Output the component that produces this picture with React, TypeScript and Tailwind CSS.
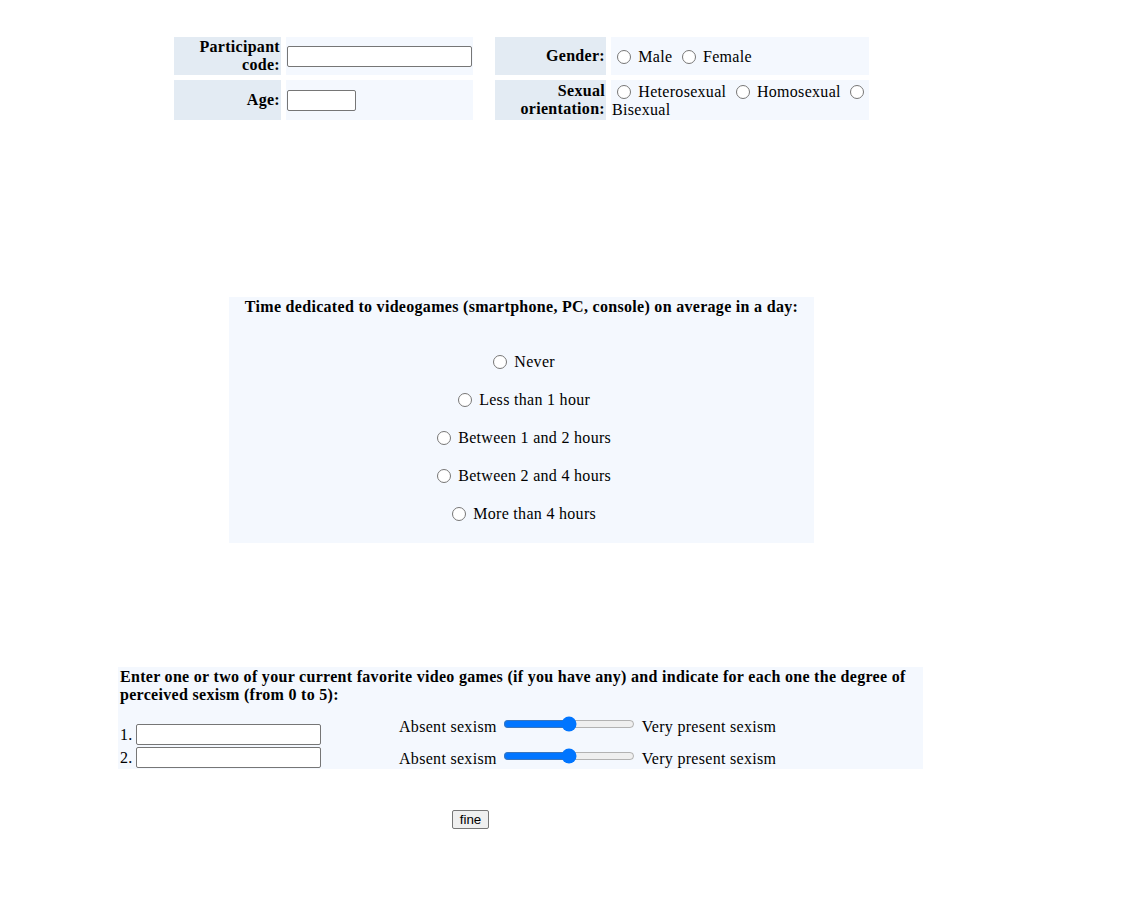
export default function App() {
  const times = [
    "Never",
    "Less than 1 hour",
    "Between 1 and 2 hours",
    "Between 2 and 4 hours",
    "More than 4 hours",
  ];

  const radio = "ml-[5px] mr-[3px] mt-[3px] w-[14px] h-[14px] align-[-2px]";
  const textInput = "h-[21px] border border-[#767676] rounded-[2px] bg-white";

  return (
    <div className="min-h-[897px] bg-white text-black text-[16px] tracking-[0.3px] font-['Liberation_Serif','Times_New_Roman',serif]">
      {/* Personal data */}
      <div className="pt-[37px] pl-[174px]">
        <div className="grid grid-cols-[107px_187px_12px_111px_258px] grid-rows-[38px_40px] gap-[5px] w-max">
          <div className="bg-[#e3ebf3] flex items-center justify-end text-right font-bold leading-[18px] pr-[1px]">
            Participant
            <br />
            code:
          </div>
          <div className="bg-[#f4f8fe] flex items-center pl-[1px]">
            <input type="text" className={`${textInput} w-[185px]`} />
          </div>
          <div />
          <div className="bg-[#e3ebf3] flex items-center justify-end text-right font-bold leading-[18px] pr-[1px]">
            Gender:
          </div>
          <div className="bg-[#f4f8fe] flex items-center pl-[1px]">
            <div className="leading-[18px]">
              <input type="radio" name="gender" className={radio} /> Male{" "}
              <input type="radio" name="gender" className={radio} /> Female
            </div>
          </div>

          <div className="bg-[#e3ebf3] flex items-center justify-end text-right font-bold leading-[18px] pr-[1px]">
            Age:
          </div>
          <div className="bg-[#f4f8fe] flex items-center pl-[1px]">
            <input type="text" className={`${textInput} w-[69px]`} />
          </div>
          <div />
          <div className="bg-[#e3ebf3] flex items-center justify-end text-right font-bold leading-[18px] pr-[1px]">
            <div>
              Sexual
              <br />
              orientation:
            </div>
          </div>
          <div className="bg-[#f4f8fe] flex items-center pl-[1px]">
            <div className="leading-[18px]">
              <input type="radio" name="orient" className={radio} /> Heterosexual{" "}
              <input type="radio" name="orient" className={radio} /> Homosexual{" "}
              <input type="radio" name="orient" className={radio} /> Bisexual
            </div>
          </div>
        </div>
      </div>

      {/* Time on videogames */}
      <div className="mt-[177px] ml-[229px] w-[585px] bg-[#f4f8fe] pb-[18px]">
        <div className="h-[20px] leading-[20px] text-center font-bold">
          Time dedicated to videogames (smartphone, PC, console) on average in a day:
        </div>
        <div className="mt-[34px] flex flex-col gap-[16px]">
          {times.map((t) => (
            <div key={t} className="h-[22px] leading-[22px] text-center">
              <input type="radio" name="time" className={radio} /> {t}
            </div>
          ))}
        </div>
      </div>

      {/* Favourite games */}
      <div className="mt-[124px] ml-[118px] w-[805px] bg-[#f4f8fe] pl-[2px] pt-[1px]">
        <div className="font-bold leading-[18px]">
          Enter one or two of your current favorite video games (if you have any) and indicate for each one the degree of perceived sexism (from 0 to 5):
        </div>
        <div className="flex h-[65px]">
          <div className="w-[201px] flex flex-col justify-end">
            {[1, 2].map((n) => (
              <div key={n} className="h-[23px] flex items-center">
                <span className="leading-[18px]">{n}.</span>
                <input type="text" className={`${textInput} w-[185px] ml-[3px]`} />
              </div>
            ))}
          </div>
          <div className="ml-[78px] pt-[10px] flex flex-col gap-[12px]">
            {[1, 2].map((n) => (
              <div key={n} className="h-[20px] flex items-center">
                <span className="pt-[6px] leading-[18px]">Absent sexism</span>
                <input
                  type="range"
                  min={0}
                  max={100}
                  defaultValue={50}
                  className="ml-[6px] w-[132px] m-0"
                />
                <span className="ml-[7px] pt-[6px] leading-[18px]">Very present sexism</span>
              </div>
            ))}
          </div>
        </div>
      </div>

      <div className="mt-[41px] ml-[452px] flex">
        <button className="h-[19px] w-[37px] border border-[#767676] rounded-[2px] bg-[#efefef] text-[13.33px] leading-[15px] tracking-normal font-['Liberation_Sans',Arial,sans-serif]">
          fine
        </button>
      </div>
    </div>
  );
}
